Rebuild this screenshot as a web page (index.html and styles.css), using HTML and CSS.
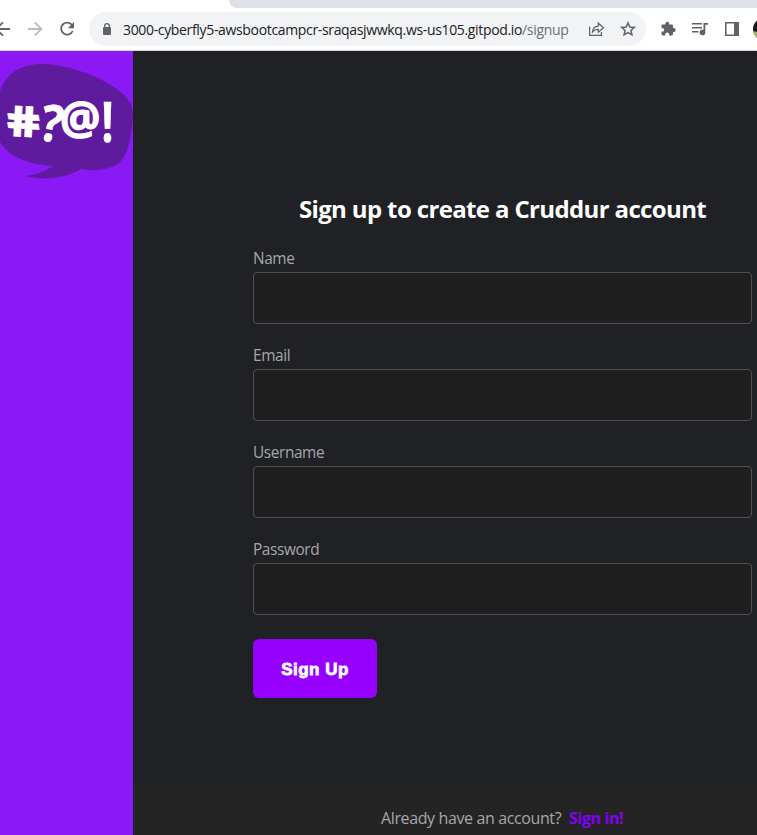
FILE: index.html
```html
<!DOCTYPE html>
<html lang="en">
<head>
<meta charset="utf-8">
<title>Cruddur</title>
<link rel="stylesheet" href="styles.css">
</head>
<body>
<div class="window">
  <header class="browser">
    <div class="tabstrip"></div>
    <div class="toolbar">
      <svg class="nav-icons" width="89" height="34" viewBox="0 0 89 34" fill="none" stroke="#5f6368" stroke-width="1.8">
        <path d="M10 17H-4M3 10.3L-3.7 17L3 23.7"/>
        <path stroke="#babcbe" d="M28 17H41M34.7 10.3L41.4 17L34.7 23.7"/>
        <path d="M72.3 13.5A6 6 0 1 0 72.7 19"/>
        <path fill="#5f6368" stroke="none" d="M74 10V16.2H67.8Z"/>
      </svg>
      <div class="address">
        <svg class="lock" width="10" height="12" viewBox="0 0 10 12"><rect x="1" y="4" width="8" height="8" rx="1" fill="#5f6368"/><path d="M2.7 5V3a2.3 2.3 0 0 1 4.6 0V5" fill="none" stroke="#5f6368" stroke-width="1.3"/></svg>
        <span class="url">3000-cyberfly5-awsbootcampcr-sraqasjwwkq.ws-us105.gitpod.io<span class="path">/signup</span></span>
        <svg class="addr-icons" width="50" height="18" viewBox="0 0 50 18" fill="none" stroke="#5f6368" stroke-width="1.2">
          <path d="M1.6 6.5V15.4H13.4V12M4.5 12C4.7 8.5 6.8 6.4 10.3 6.2V3.2L15.5 7.8L10.3 12.2V9.3C7.7 9.3 6 10 4.5 12Z"/>
          <path stroke-width="1.5" d="M40 2.8L41.8 7L46.3 7.4L42.9 10.4L43.9 14.8L40 12.5L36.1 14.8L37.1 10.4L33.7 7.4L38.2 7Z"/>
        </svg>
      </div>
      <svg class="ext-icons" width="111" height="34" viewBox="0 0 111 34" fill="#5f6368">
        <path d="M15.5 13H18.2V12.2a1.9 1.9 0 0 1 3.8 0V13H24.5a1.3 1.3 0 0 1 1.3 1.3V16.7H26.6a1.9 1.9 0 0 1 0 3.8H25.8V22.7a1.3 1.3 0 0 1-1.3 1.3H22V23.2a2 2 0 0 0-4 0V24H15.6a1.3 1.3 0 0 1-1.3-1.3V20.4H15a1.9 1.9 0 0 0 0-3.9H14.3V14.3A1.3 1.3 0 0 1 15.5 13Z" transform="translate(1.2 -.6)"/>
        <path d="M46 11H56V12.6H46ZM46 15H56V16.6H46ZM46 19H52.5V20.6H46ZM57.5 11H62V12.8H59.3V20.5A2.8 2.8 0 1 1 57.5 17.9Z"/>
        <path fill-rule="evenodd" d="M79 10H93V24H79ZM80.6 11.6V22.4H88V11.6Z"/>
        <circle cx="118" cy="17" r="11" fill="#17191b"/>
        <path d="M107.3 19Q108 24 111 26V20Z" fill="#a4b85c"/>
      </svg>
    </div>
  </header>
  <div class="page">
    <aside class="sidebar">
      <svg class="logo" width="133" height="130" viewBox="0 0 133 130">
        <path fill="#5f1b9e" d="M0 40C7 22 20 13 43 13C65 13 103 25 123 43C130 49 133 57 133 65C132 80 129 102 121 110C114 118 96 121 81 118C66 127 44 130 25 125C37 124 47 119 53 115C34 114 10 108 0 91Z"/>
        <g class="swear">
          <text transform="matrix(1 .05 .17 1 9 85)" font-size="43" textLength="34" lengthAdjust="spacingAndGlyphs">#</text>
          <text class="thin" transform="matrix(1 .1 -.18 1 38 89)" font-size="50" textLength="22" lengthAdjust="spacingAndGlyphs">?</text>
          <text class="at" transform="translate(60.5 84.5) rotate(-3)" font-size="46" textLength="41" lengthAdjust="spacingAndGlyphs">@</text>
          <text class="thin" transform="translate(101.5 91)" font-size="55" textLength="12" lengthAdjust="spacingAndGlyphs">!</text>
        </g>
      </svg>
    </aside>
    <main class="content">
      <form class="signup">
        <h1><span>Sign up to create a Cruddur account</span></h1>
        <label class="field"><span>Name</span><input type="text"></label>
        <label class="field"><span>Email</span><input type="text"></label>
        <label class="field"><span>Username</span><input type="text"></label>
        <label class="field"><span>Password</span><input type="password"></label>
        <button type="button">Sign Up</button>
      </form>
      <footer><span class="question">Already have an account?</span><a>Sign in!</a></footer>
    </main>
  </div>
</div>
</body>
</html>
```
FILE: styles.css
```css
* { box-sizing: border-box; }
body { margin: 0; font-family: "Open Sans", "Noto Sans", sans-serif; }
.window { width: 757px; height: 835px; overflow: hidden; display: flex; flex-direction: column; }
.browser { height: 51px; background: #fff; border-bottom: 1px solid #d5d7da; flex: none; }
.tabstrip { height: 8px; margin-left: 229px; background: #dee1e6; border-bottom-left-radius: 8px; }
.toolbar { display: flex; height: 34px; margin-top: 4px; }
.toolbar svg { flex: none; display: block; }
.address { width: 557px; height: 34px; border-radius: 17px; background: #f1f3f4; display: flex; align-items: center; padding-left: 13px; flex: none; }
.lock { margin-right: 11px; }
.url { width: 465px; font-size: 14px; letter-spacing: -0.34px; color: #202124; white-space: nowrap; flex: none; }
.path { color: #6b6f74; }
.page { display: flex; flex: 1; min-height: 0; }
.sidebar { width: 133px; background: #8a19f5; flex: none; }
.logo { display: block; }
.swear { fill: #fff; stroke: #fff; stroke-width: .6px; font-family: "Open Sans", sans-serif; font-weight: 800; }
.swear .thin { font-weight: 700; }
.swear .at { font-weight: 700; stroke-width: 1px; }
.content { flex: 1; background: #202124; display: flex; flex-direction: column; }
.signup { height: 732px; width: 619px; padding: 141px 0 0 120px; flex: none; }
h1 { margin: 0 0 22px; height: 34px; line-height: 33px; font-size: 24px; text-align: center; color: #fff; white-space: nowrap; letter-spacing: -0.64px; }
.field { display: block; height: 97px; color: #a5a7aa; font-size: 16px; }
.field span { display: block; height: 24px; line-height: 21px; letter-spacing: -0.4px; font-size: 15.4px; }
.field input { display: block; width: 499px; height: 52px; border: 1px solid #505152; border-radius: 4px; background: #1f1f1f; padding: 0 16px; outline: 0; }
button { display: block; width: 124px; height: 59px; margin-top: 3px; padding: 2px 0 0; border: 0; border-radius: 6px; background: #9500ff; color: #fff; font: 700 17px "Liberation Sans", sans-serif; letter-spacing: .5px; -webkit-text-stroke: .8px #fff; }
footer { flex: 1; width: 739px; padding: 24px 0 0 248px; background: #242424; color: #a5a7aa; font-size: 16px; line-height: 23px; white-space: nowrap; }
.question { display: inline-block; width: 188px; letter-spacing: -0.38px; }
footer a { color: #8200f5; font-weight: 700; letter-spacing: -0.4px; }
```
